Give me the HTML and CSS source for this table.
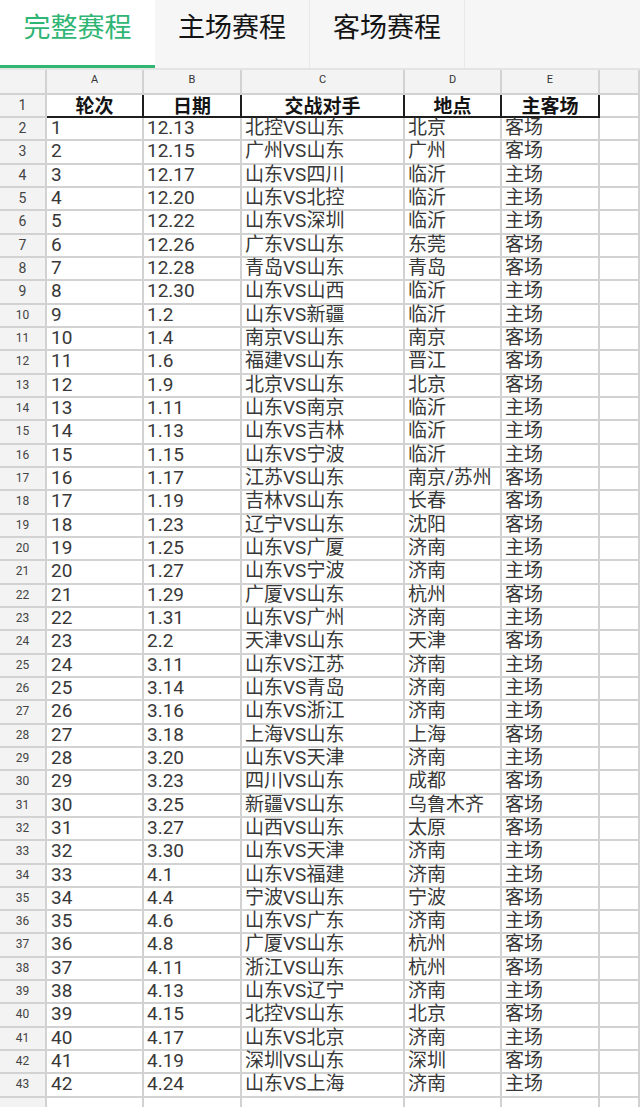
FILE: index.html
```html
<!DOCTYPE html>
<html lang="zh">
<head>
<meta charset="utf-8">
<title>赛程</title>
<link rel="stylesheet" href="styles.css">
</head>
<body>
<div class="tabs">
  <div class="tab active">完整赛程</div>
  <div class="tab">主场赛程</div>
  <div class="tab">客场赛程</div>
  <div class="tab-rest"></div>
</div>
<div class="sheet">
  <div class="c col corner"></div><div class="c col">A</div><div class="c col">B</div><div class="c col">C</div><div class="c col">D</div><div class="c col">E</div><div class="c col"></div>
  <div class="c rn">1</div><div class="c h">轮次</div><div class="c h">日期</div><div class="c h">交战对手</div><div class="c h">地点</div><div class="c h">主客场</div><div class="c"></div>
  <div class="c rn">2</div><div class="c a">1</div><div class="c">12.13</div><div class="c">北控VS山东</div><div class="c">北京</div><div class="c">客场</div><div class="c"></div>
  <div class="c rn">3</div><div class="c a">2</div><div class="c">12.15</div><div class="c">广州VS山东</div><div class="c">广州</div><div class="c">客场</div><div class="c"></div>
  <div class="c rn">4</div><div class="c a">3</div><div class="c">12.17</div><div class="c">山东VS四川</div><div class="c">临沂</div><div class="c">主场</div><div class="c"></div>
  <div class="c rn">5</div><div class="c a">4</div><div class="c">12.20</div><div class="c">山东VS北控</div><div class="c">临沂</div><div class="c">主场</div><div class="c"></div>
  <div class="c rn">6</div><div class="c a">5</div><div class="c">12.22</div><div class="c">山东VS深圳</div><div class="c">临沂</div><div class="c">主场</div><div class="c"></div>
  <div class="c rn">7</div><div class="c a">6</div><div class="c">12.26</div><div class="c">广东VS山东</div><div class="c">东莞</div><div class="c">客场</div><div class="c"></div>
  <div class="c rn">8</div><div class="c a">7</div><div class="c">12.28</div><div class="c">青岛VS山东</div><div class="c">青岛</div><div class="c">客场</div><div class="c"></div>
  <div class="c rn">9</div><div class="c a">8</div><div class="c">12.30</div><div class="c">山东VS山西</div><div class="c">临沂</div><div class="c">主场</div><div class="c"></div>
  <div class="c rn rn2">10</div><div class="c a">9</div><div class="c">1.2</div><div class="c">山东VS新疆</div><div class="c">临沂</div><div class="c">主场</div><div class="c"></div>
  <div class="c rn rn2">11</div><div class="c a">10</div><div class="c">1.4</div><div class="c">南京VS山东</div><div class="c">南京</div><div class="c">客场</div><div class="c"></div>
  <div class="c rn rn2">12</div><div class="c a">11</div><div class="c">1.6</div><div class="c">福建VS山东</div><div class="c">晋江</div><div class="c">客场</div><div class="c"></div>
  <div class="c rn rn2">13</div><div class="c a">12</div><div class="c">1.9</div><div class="c">北京VS山东</div><div class="c">北京</div><div class="c">客场</div><div class="c"></div>
  <div class="c rn rn2">14</div><div class="c a">13</div><div class="c">1.11</div><div class="c">山东VS南京</div><div class="c">临沂</div><div class="c">主场</div><div class="c"></div>
  <div class="c rn rn2">15</div><div class="c a">14</div><div class="c">1.13</div><div class="c">山东VS吉林</div><div class="c">临沂</div><div class="c">主场</div><div class="c"></div>
  <div class="c rn rn2">16</div><div class="c a">15</div><div class="c">1.15</div><div class="c">山东VS宁波</div><div class="c">临沂</div><div class="c">主场</div><div class="c"></div>
  <div class="c rn rn2">17</div><div class="c a">16</div><div class="c">1.17</div><div class="c">江苏VS山东</div><div class="c">南京/苏州</div><div class="c">客场</div><div class="c"></div>
  <div class="c rn rn2">18</div><div class="c a">17</div><div class="c">1.19</div><div class="c">吉林VS山东</div><div class="c">长春</div><div class="c">客场</div><div class="c"></div>
  <div class="c rn rn2">19</div><div class="c a">18</div><div class="c">1.23</div><div class="c">辽宁VS山东</div><div class="c">沈阳</div><div class="c">客场</div><div class="c"></div>
  <div class="c rn rn2">20</div><div class="c a">19</div><div class="c">1.25</div><div class="c">山东VS广厦</div><div class="c">济南</div><div class="c">主场</div><div class="c"></div>
  <div class="c rn rn2">21</div><div class="c a">20</div><div class="c">1.27</div><div class="c">山东VS宁波</div><div class="c">济南</div><div class="c">主场</div><div class="c"></div>
  <div class="c rn rn2">22</div><div class="c a">21</div><div class="c">1.29</div><div class="c">广厦VS山东</div><div class="c">杭州</div><div class="c">客场</div><div class="c"></div>
  <div class="c rn rn2">23</div><div class="c a">22</div><div class="c">1.31</div><div class="c">山东VS广州</div><div class="c">济南</div><div class="c">主场</div><div class="c"></div>
  <div class="c rn rn2">24</div><div class="c a">23</div><div class="c">2.2</div><div class="c">天津VS山东</div><div class="c">天津</div><div class="c">客场</div><div class="c"></div>
  <div class="c rn rn2">25</div><div class="c a">24</div><div class="c">3.11</div><div class="c">山东VS江苏</div><div class="c">济南</div><div class="c">主场</div><div class="c"></div>
  <div class="c rn rn2">26</div><div class="c a">25</div><div class="c">3.14</div><div class="c">山东VS青岛</div><div class="c">济南</div><div class="c">主场</div><div class="c"></div>
  <div class="c rn rn2">27</div><div class="c a">26</div><div class="c">3.16</div><div class="c">山东VS浙江</div><div class="c">济南</div><div class="c">主场</div><div class="c"></div>
  <div class="c rn rn2">28</div><div class="c a">27</div><div class="c">3.18</div><div class="c">上海VS山东</div><div class="c">上海</div><div class="c">客场</div><div class="c"></div>
  <div class="c rn rn2">29</div><div class="c a">28</div><div class="c">3.20</div><div class="c">山东VS天津</div><div class="c">济南</div><div class="c">主场</div><div class="c"></div>
  <div class="c rn rn2">30</div><div class="c a">29</div><div class="c">3.23</div><div class="c">四川VS山东</div><div class="c">成都</div><div class="c">客场</div><div class="c"></div>
  <div class="c rn rn2">31</div><div class="c a">30</div><div class="c">3.25</div><div class="c">新疆VS山东</div><div class="c">乌鲁木齐</div><div class="c">客场</div><div class="c"></div>
  <div class="c rn rn2">32</div><div class="c a">31</div><div class="c">3.27</div><div class="c">山西VS山东</div><div class="c">太原</div><div class="c">客场</div><div class="c"></div>
  <div class="c rn rn2">33</div><div class="c a">32</div><div class="c">3.30</div><div class="c">山东VS天津</div><div class="c">济南</div><div class="c">主场</div><div class="c"></div>
  <div class="c rn rn2">34</div><div class="c a">33</div><div class="c">4.1</div><div class="c">山东VS福建</div><div class="c">济南</div><div class="c">主场</div><div class="c"></div>
  <div class="c rn rn2">35</div><div class="c a">34</div><div class="c">4.4</div><div class="c">宁波VS山东</div><div class="c">宁波</div><div class="c">客场</div><div class="c"></div>
  <div class="c rn rn2">36</div><div class="c a">35</div><div class="c">4.6</div><div class="c">山东VS广东</div><div class="c">济南</div><div class="c">主场</div><div class="c"></div>
  <div class="c rn rn2">37</div><div class="c a">36</div><div class="c">4.8</div><div class="c">广厦VS山东</div><div class="c">杭州</div><div class="c">客场</div><div class="c"></div>
  <div class="c rn rn2">38</div><div class="c a">37</div><div class="c">4.11</div><div class="c">浙江VS山东</div><div class="c">杭州</div><div class="c">客场</div><div class="c"></div>
  <div class="c rn rn2">39</div><div class="c a">38</div><div class="c">4.13</div><div class="c">山东VS辽宁</div><div class="c">济南</div><div class="c">主场</div><div class="c"></div>
  <div class="c rn rn2">40</div><div class="c a">39</div><div class="c">4.15</div><div class="c">北控VS山东</div><div class="c">北京</div><div class="c">客场</div><div class="c"></div>
  <div class="c rn rn2">41</div><div class="c a">40</div><div class="c">4.17</div><div class="c">山东VS北京</div><div class="c">济南</div><div class="c">主场</div><div class="c"></div>
  <div class="c rn rn2">42</div><div class="c a">41</div><div class="c">4.19</div><div class="c">深圳VS山东</div><div class="c">深圳</div><div class="c">客场</div><div class="c"></div>
  <div class="c rn rn2">43</div><div class="c a">42</div><div class="c">4.24</div><div class="c">山东VS上海</div><div class="c">济南</div><div class="c">主场</div><div class="c"></div>
  <div class="c rn rn2"></div><div class="c"></div><div class="c"></div><div class="c"></div><div class="c"></div><div class="c"></div><div class="c"></div>
</div>
</body>
</html>
```
FILE: styles.css
```css
html, body {
  margin: 0;
  padding: 0;
  background: #ffffff;
  overflow: hidden;
}

body {
  width: 640px;
  height: 1107px;
  font-family: "Roboto", "Noto Sans CJK SC", sans-serif;
}

.tabs {
  display: flex;
  height: 68px;
  background: #f6f6f6;
}

.tab {
  width: 155px;
  box-sizing: border-box;
  display: flex;
  align-items: center;
  justify-content: center;
  font-family: "Noto Sans CJK SC", sans-serif;
  font-size: 27px;
  line-height: 34px;
  color: #141414;
  padding-bottom: 16px;
  border-right: 1px solid #e9e9e9;
}

.tab:first-child {
  border-right: none;
}

.tab.active {
  background: #ffffff;
  color: #2fb574;
  border-bottom: 3px solid #33b472;
  padding-bottom: 13px;
}

.tab-rest {
  flex: 1;
}

.sheet {
  display: grid;
  grid-template-columns: 47px 97px 98px 163px 97px 98px 40px;
  grid-template-rows: 25px 23px;
  grid-auto-rows: 23.33px;
  border-top: 2px solid #e4e4e4;
  box-sizing: border-box;
}

.c {
  box-sizing: border-box;
  border-right: 2px solid #d2d2d2;
  border-bottom: 2px solid #d2d2d2;
  font-size: 19px;
  line-height: 19px;
  color: #383838;
  padding-left: 3px;
  white-space: nowrap;
}

.c.a {
  padding-left: 4px;
}

.col {
  background: #f3f3f3;
  font-size: 11px;
  line-height: 20px;
  color: #333333;
  text-align: center;
  padding-left: 0;
}

.rn {
  background: #f3f3f3;
  font-size: 14px;
  line-height: 20px;
  color: #444444;
  text-align: center;
  padding-left: 0;
}

.rn.rn2 {
  font-size: 12px;
}

.h {
  font-family: "Noto Sans CJK SC", sans-serif;
  font-weight: bold;
  color: #141414;
  font-size: 19px;
  line-height: 20px;
  text-align: center;
  padding-left: 0;
  border-right: 2.5px solid #1e1e1e;
  border-bottom: 2.5px solid #1e1e1e;
}
```
